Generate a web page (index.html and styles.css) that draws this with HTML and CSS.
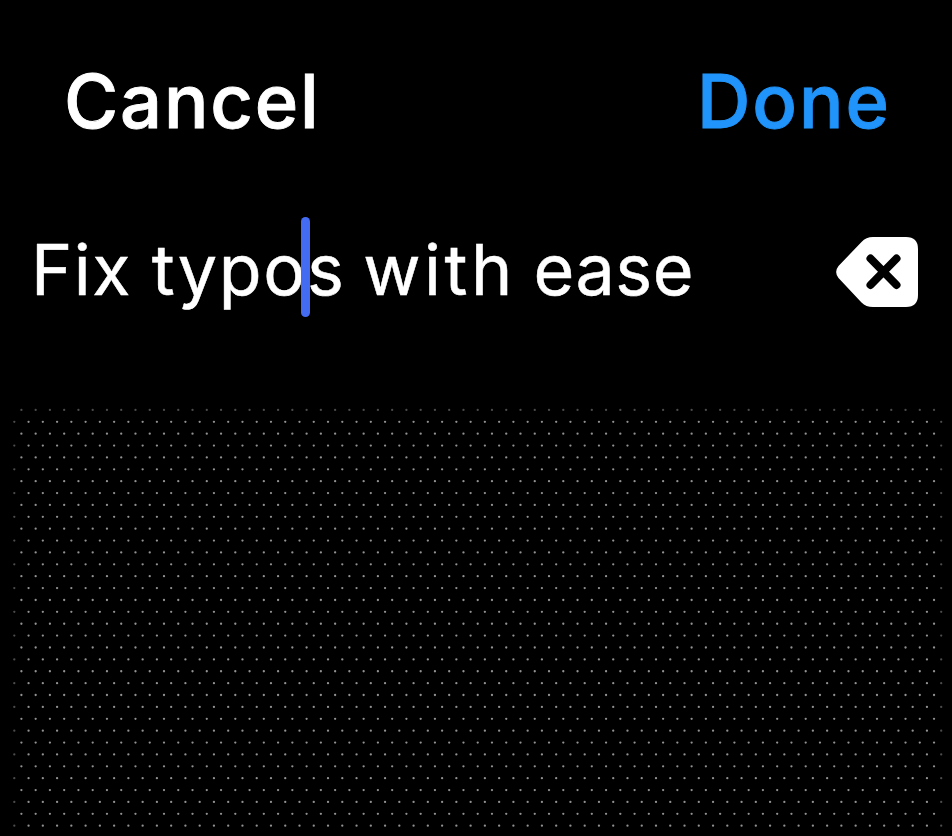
FILE: index.html
```
<!DOCTYPE html>
<html lang="en">
<head>
<meta charset="utf-8">
<title>Text input</title>
<link rel="stylesheet" href="styles.css">
</head>
<body>
<main class="screen">
  <header class="toolbar">
    <button class="action cancel">Cancel</button>
    <button class="action done">Done</button>
  </header>
  <section class="entry">
    <div class="text"><span class="fix">Fix</span> <span class="typos">typo<i class="caret"></i>s</span> <span class="with">with</span> <span class="ease">ease</span></div>
    <button class="delete" aria-label="Delete">
      <svg width="82" height="70" viewBox="0 0 82 70">
        <path fill="#fff" d="M37 0H70Q82 0 82 12V58Q82 70 70 70H37Q30 70 25.500 65.500L2.500 41Q-2.200 35 2.500 29L25.500 5Q30 0 37 0Z"/>
        <path d="M34.500 21.500L60.500 48M60.500 21.500L34.500 48" fill="none" stroke="#000" stroke-width="8" stroke-linecap="round"/>
      </svg>
    </button>
  </section>
  <svg class="dots" width="952" height="436" viewBox="0 400 952 436" aria-hidden="true"></svg>
</main>
<script src="dots.js"></script>
</body>
</html>
```
FILE: styles.css
```
body { margin: 0; background: #000; color: #fff; font-family: Inter, sans-serif; }
button { padding: 0; border: 0; background: none; color: inherit; font: inherit; }
.screen { width: 952px; height: 836px; overflow: hidden; }
.toolbar { display: flex; justify-content: space-between; box-sizing: border-box; height: 200px; padding: 56px 61px 0 64px; }
.action { height: 90px; font-size: 74px; line-height: 90px; font-weight: 500; letter-spacing: 1.8px; white-space: nowrap; -webkit-text-stroke: 0.9px currentColor; }
.done { color: #2094fa; letter-spacing: 2px; }
.entry { display: flex; justify-content: space-between; box-sizing: border-box; height: 200px; padding: 16px 34px 0 31px; }
.text { height: 100px; font-size: 70px; line-height: 107px; font-weight: 400; white-space: nowrap; -webkit-text-stroke: 0.5px currentColor; }
.fix { letter-spacing: 1.500px; }
.typos { position: relative; letter-spacing: 1.700px; }
.with { letter-spacing: 3.500px; margin-left: -2px; }
.ease { letter-spacing: 0.500px; margin-left: -2px; }
.caret { position: absolute; left: 149.500px; top: -10px; width: 9px; height: 100px; border-radius: 5px; background: #446cf3; }
.delete { width: 82px; height: 70px; margin-top: 20.500px; }
.delete svg, .dots { display: block; }
.dots { fill: #929292; }
.dots .edge { fill: #4c4c4c; }
```
FILE: dots.js
```
const grid = document.querySelector('.dots');
for (let row = 0; row < 36; row++) {
  const offset = row % 2;
  const count = offset ? 66 : 65;
  for (let col = 0; col < count; col++) {
    const dot = document.createElementNS('http://www.w3.org/2000/svg', 'circle');
    dot.setAttribute('cx', (offset ? 14.3 : 21.4) + col * 14.26);
    dot.setAttribute('cy', 409.9 + row * 11.88);
    dot.setAttribute('r', 1.15);
    if (row === 0 || (offset && (col === 0 || col === count - 1))) {
      dot.setAttribute('class', 'edge');
    }
    grid.append(dot);
  }
}
```
